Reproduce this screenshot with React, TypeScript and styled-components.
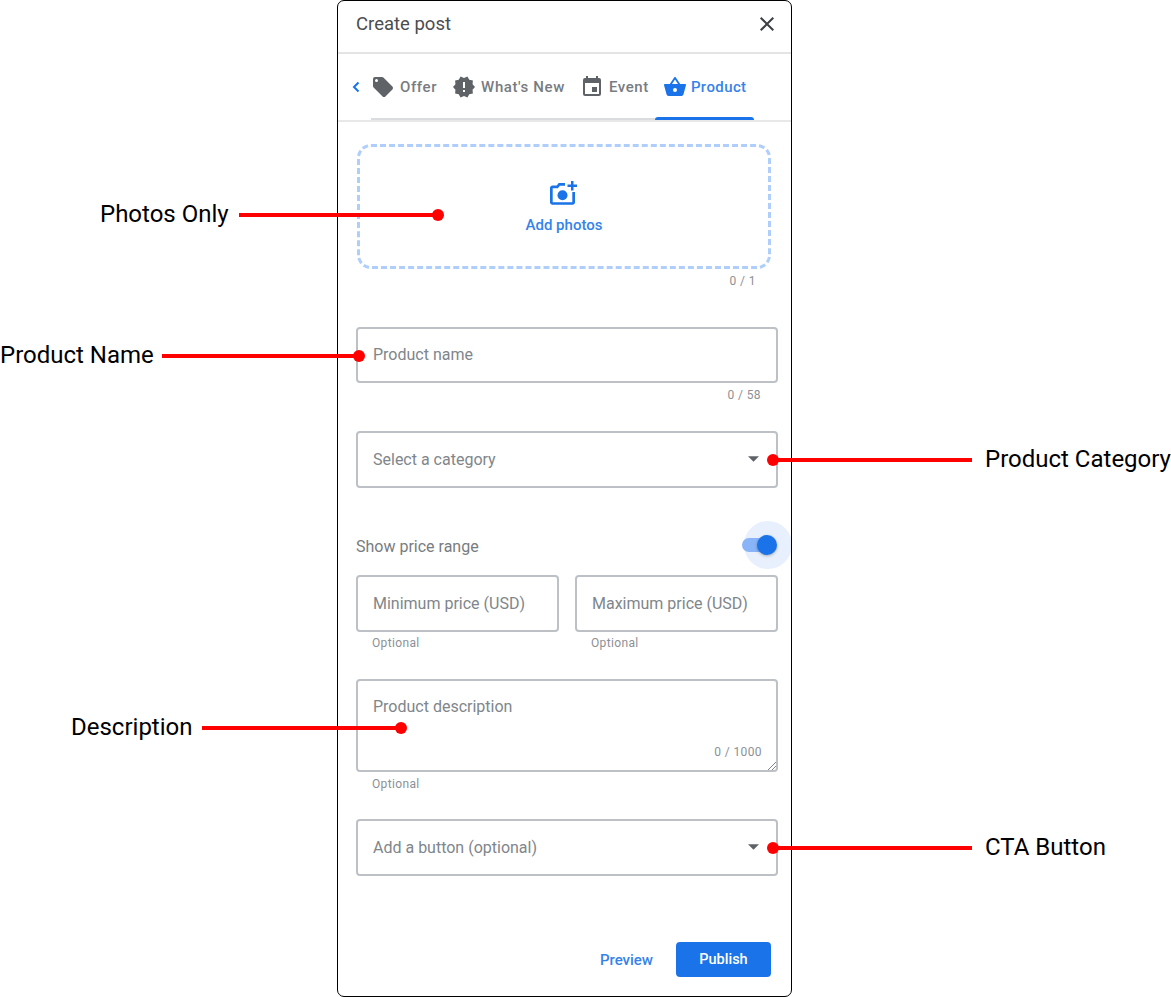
import styled, { createGlobalStyle } from 'styled-components'

const GlobalStyle = createGlobalStyle`
  html, body {
    margin: 0;
    padding: 0;
    background: #fff;
    font-family: Roboto, 'Liberation Sans', sans-serif;
  }
  * { box-sizing: border-box; }
`

const blue = '#1a73e8'
const softBlue = '#3583ea'

const tabs = [
  { label: 'Offer', icon: 'offer' },
  { label: "What's New", icon: 'new' },
  { label: 'Event', icon: 'event' },
]

const callouts = [
  { label: 'Photos Only', left: 100, top: 215, lineFrom: 239, lineTo: 438 },
  { label: 'Product Name', left: 0, top: 356, lineFrom: 162, lineTo: 359 },
  { label: 'Description', left: 71, top: 728, lineFrom: 202, lineTo: 401 },
  { label: 'Product Category', left: 985, top: 460, lineFrom: 773, lineTo: 972 },
  { label: 'CTA Button', left: 985, top: 848, lineFrom: 773, lineTo: 972 },
]

const TabIcon = ({ name }: { name: string }) => {
  if (name === 'offer') {
    return (
      <svg width="24" height="24" viewBox="0 0 24 24" fill="#5f6368">
        <path d="M21.41 11.58l-9-9A2 2 0 0 0 11 2H4a2 2 0 0 0-2 2v7c0 .55.22 1.05.59 1.42l9 9c.36.36.86.58 1.41.58s1.05-.22 1.41-.59l7-7c.37-.36.59-.86.59-1.41s-.23-1.06-.59-1.42zM5.5 7A1.5 1.5 0 1 1 5.5 4a1.5 1.5 0 0 1 0 3z" />
      </svg>
    )
  }
  if (name === 'new') {
    return (
      <svg width="24" height="24" viewBox="0 0 24 24" fill="#5f6368">
        <path d="M23 12l-2.44-2.79.34-3.69-3.61-.82L15.4 1.5 12 2.96 8.6 1.5 6.71 4.69 3.1 5.5l.34 3.7L1 12l2.44 2.79-.34 3.7 3.61.82L8.6 22.5l3.4-1.47 3.4 1.46 1.89-3.19 3.61-.82-.34-3.69L23 12zm-10 5h-2v-2h2v2zm0-4h-2V7h2v6z" />
      </svg>
    )
  }
  if (name === 'event') {
    return (
      <svg width="24" height="24" viewBox="0 0 24 24" fill="#5f6368">
        <path d="M17 12h-5v5h5v-5zM16 1v2H8V1H6v2H5a2 2 0 0 0-2 2v14a2 2 0 0 0 2 2h14a2 2 0 0 0 2-2V5a2 2 0 0 0-2-2h-1V1h-2zm3 18H5V8h14v11z" />
      </svg>
    )
  }
  return (
    <svg width="24" height="24" viewBox="0 0 24 24" fill={blue}>
      <path d="M17.21 9l-4.38-6.56a1 1 0 0 0-1.66 0L6.79 9H2c-.55 0-1 .45-1 1 0 .09.01.18.04.27l2.54 9.27A2 2 0 0 0 5.5 21h13a2 2 0 0 0 1.93-1.46l2.54-9.27L23 10c0-.55-.45-1-1-1h-4.79zM9 9l3-4.4L15 9H9zm3 8a2 2 0 1 1 0-4 2 2 0 0 1 0 4z" />
    </svg>
  )
}

const Caret = () => (
  <svg width="11" height="6" viewBox="0 0 10 5" fill="#5f6368">
    <path d="M0 0l5 5 5-5z" />
  </svg>
)

export default function App() {
  return (
    <Canvas>
      <GlobalStyle />
      <Card>
        <Header>
          <Title>Create post</Title>
          <svg width="24" height="24" viewBox="0 0 24 24" fill="#3c4043">
            <path d="M19 6.41L17.59 5 12 10.59 6.41 5 5 6.41 10.59 12 5 17.59 6.41 19 12 13.41 17.59 19 19 17.59 13.41 12z" />
          </svg>
        </Header>
        <TabBar>
          <BackArrow width="10" height="12" viewBox="0 0 10 12" fill="none" stroke={blue} strokeWidth="2">
            <path d="M7.5 1.5L3 6l4.5 4.5" />
          </BackArrow>
          {tabs.map((t) => (
            <Tab key={t.label}>
              <TabIcon name={t.icon} />
              <TabLabel>{t.label}</TabLabel>
            </Tab>
          ))}
          <ActiveTab>
            <TabIcon name="product" />
            <TabLabel $active>Product</TabLabel>
          </ActiveTab>
        </TabBar>

        <Body>
          <DropZone>
            <svg width="30" height="26" viewBox="1 0 30 26" fill={blue}>
              <path d="M4.500 5.500h4.200l2-2.500H17v2.700h-5.100L9.900 8.200H4.700v14h19.600V12H27v10.300c0 1.300-1.100 2.400-2.400 2.400H4.400C3.100 24.700 2 23.600 2 22.300V8c0-1.400 1.100-2.500 2.500-2.500z" />
              <circle cx="14.500" cy="15.300" r="5" />
              <path d="M23 1h2.500v3.500H29V7h-3.500v3.500H23V7h-3.500V4.500H23z" />
            </svg>
            <AddPhotos>Add photos</AddPhotos>
          </DropZone>
          <Counter $pad={22}>0 / 1</Counter>

          <Field $top={39} $height={56}>
            <Placeholder>Product name</Placeholder>
          </Field>
          <Counter $pad={17}>0 / 58</Counter>

          <Field $top={29} $height={57}>
            <Placeholder>Select a category</Placeholder>
            <Caret />
          </Field>

          <ToggleRow>
            <ToggleLabel>Show price range</ToggleLabel>
            <Toggle>
              <Halo />
              <Track />
              <Knob />
            </Toggle>
          </ToggleRow>

          <PriceRow>
            <PriceColumn>
              <Field $top={0} $height={57}>
                <Placeholder>Minimum price (USD)</Placeholder>
              </Field>
              <Hint $top={4}>Optional</Hint>
            </PriceColumn>
            <PriceColumn>
              <Field $top={0} $height={57}>
                <Placeholder>Maximum price (USD)</Placeholder>
              </Field>
              <Hint $top={4}>Optional</Hint>
            </PriceColumn>
          </PriceRow>

          <TextArea>
            <Placeholder>Product description</Placeholder>
            <AreaCount>0 / 1000</AreaCount>
            <Grip width="8" height="8" viewBox="0 0 8 8" stroke="#80868b" strokeWidth="1">
              <path d="M0 8L8 0M4 8l4-4" />
            </Grip>
          </TextArea>
          <Hint $top={5}>Optional</Hint>

          <Field $top={28} $height={57}>
            <Placeholder>Add a button (optional)</Placeholder>
            <Caret />
          </Field>

          <Footer>
            <PreviewButton>Preview</PreviewButton>
            <PublishButton>Publish</PublishButton>
          </Footer>
        </Body>
      </Card>

      {callouts.map((c) => (
        <Callout key={c.label}>
          <CalloutLabel style={{ left: c.left, top: c.top }}>{c.label}</CalloutLabel>
          <CalloutLine style={{ left: c.lineFrom, top: c.top - 2, width: c.lineTo - c.lineFrom }} />
          <CalloutDot
            style={{ left: (c.left > 900 ? c.lineFrom : c.lineTo) - 6, top: c.top - 6 }}
          />
        </Callout>
      ))}
    </Canvas>
  )
}

const Canvas = styled.div`
  position: relative;
  width: 1171px;
  height: 997px;
  padding-left: 337px;
  overflow: hidden;
`

const Card = styled.div`
  display: flex;
  flex-direction: column;
  width: 455px;
  height: 997px;
  border: 1px solid #000;
  border-radius: 7px;
  background: #fff;
  overflow: hidden;
`

const Header = styled.div`
  display: flex;
  align-items: center;
  justify-content: space-between;
  flex-shrink: 0;
  height: 53px;
  padding: 0 12px 6px 18px;
  border-bottom: 2px solid #e4e4e4;
`

const Title = styled.div`
  font-size: 18.500px;
  color: #4a4d50;
`

const TabBar = styled.div`
  position: relative;
  display: flex;
  align-items: center;
  flex-shrink: 0;
  gap: 15px;
  height: 68px;
  padding-left: 13px;
  border-bottom: 2px solid #e8e8e8;

  &::before {
    content: '';
    position: absolute;
    left: 33px;
    width: 285px;
    bottom: 0;
    height: 2px;
    background: #dadce0;
  }
`

const BackArrow = styled.svg`
  margin-right: -5px;
`

const Tab = styled.div`
  display: flex;
  align-items: center;
  gap: 5px;
`

const ActiveTab = styled(Tab)`
  position: relative;
  align-self: stretch;
  gap: 4px;
  width: 99px;
  padding-left: 8px;
  margin-left: -9px;

  &::after {
    content: '';
    position: absolute;
    left: 0;
    right: 0;
    bottom: 0;
    height: 3px;
    border-radius: 3px 3px 0 0;
    background: ${blue};
  }
`

const TabLabel = styled.span<{ $active?: boolean }>`
  font-size: 15px;
  font-weight: 500;
  letter-spacing: ${(p) => (p.$active ? 0.4 : 0.6)}px;
  white-space: nowrap;
  color: ${(p) => (p.$active ? softBlue : '#787c81')};
`

const Body = styled.div`
  display: flex;
  flex-direction: column;
  flex: 1;
  padding: 22px 13px 0 18px;
`

const DropZone = styled.div`
  display: flex;
  flex-direction: column;
  align-items: center;
  justify-content: center;
  gap: 10px;
  width: 414px;
  height: 125px;
  margin-left: 1px;
  padding-top: 1px;
  border: 3px dashed #b0cefc;
  border-radius: 14px;
`

const AddPhotos = styled.div`
  font-size: 15px;
  font-weight: 500;
  color: ${softBlue};
`

const Counter = styled.div<{ $pad: number }>`
  align-self: flex-end;
  margin-top: 5px;
  padding-right: ${(p) => p.$pad}px;
  font-size: 12px;
  line-height: 14px;
  letter-spacing: 0.4px;
  color: #8c9095;
`

const Field = styled.div<{ $top: number; $height: number }>`
  display: flex;
  align-items: center;
  justify-content: space-between;
  height: ${(p) => p.$height}px;
  margin-top: ${(p) => p.$top}px;
  padding: 0 17px 1px 15px;
  border: 2px solid #bdc1c6;
  border-radius: 4px;
`

const Placeholder = styled.span`
  font-size: 16px;
  color: #80868b;
  white-space: nowrap;
`

const ToggleRow = styled.div`
  display: flex;
  align-items: center;
  justify-content: space-between;
  height: 48px;
  margin-top: 34px;
  margin-bottom: 5px;
`

const ToggleLabel = styled.span`
  font-size: 16px;
  color: #787c81;
`

const Toggle = styled.div`
  position: relative;
  top: -1px;
  width: 36px;
  height: 20px;
`

const Halo = styled.div`
  position: absolute;
  left: 2px;
  top: -14px;
  width: 48px;
  height: 48px;
  border-radius: 50%;
  background: #e8f0fe;
`

const Track = styled.div`
  position: absolute;
  left: 0;
  top: 3px;
  width: 34px;
  height: 14px;
  border-radius: 7px;
  background: #8ab4f8;
`

const Knob = styled.div`
  position: absolute;
  left: 15px;
  top: 0;
  width: 20px;
  height: 20px;
  border-radius: 50%;
  background: ${blue};
  box-shadow: 0 1px 3px rgba(0, 0, 0, 0.3);
`

const PriceRow = styled.div`
  display: grid;
  grid-template-columns: 203px 203px;
  gap: 16px;
`

const PriceColumn = styled.div`
  display: flex;
  flex-direction: column;
`

const Hint = styled.div<{ $top: number }>`
  margin-top: ${(p) => p.$top}px;
  padding-left: 16px;
  font-size: 12px;
  line-height: 14px;
  letter-spacing: 0.35px;
  color: #8c9095;
`

const TextArea = styled.div`
  position: relative;
  height: 93px;
  margin-top: 29px;
  padding: 16px 15px;
  border: 2px solid #bdc1c6;
  border-radius: 4px;
`

const AreaCount = styled.span`
  position: absolute;
  right: 14px;
  bottom: 11px;
  font-size: 12px;
  letter-spacing: 0.4px;
  color: #8c9095;
`

const Grip = styled.svg`
  position: absolute;
  right: 0;
  bottom: 0;
`

const Footer = styled.div`
  display: flex;
  align-items: center;
  justify-content: flex-end;
  gap: 23px;
  margin-top: 66px;
  padding-right: 7px;
`

const PreviewButton = styled.span`
  font-size: 15px;
  font-weight: 500;
  color: ${softBlue};
`

const PublishButton = styled.div`
  display: flex;
  align-items: center;
  justify-content: center;
  width: 95px;
  height: 35px;
  border-radius: 4px;
  background: ${blue};
  font-size: 14.500px;
  font-weight: 500;
  color: #fff;
`

const Callout = styled.div`
  display: contents;
`

const CalloutLabel = styled.div`
  position: absolute;
  margin-top: -1px;
  transform: translateY(-50%);
  font-size: 24px;
  line-height: 28px;
  color: #000;
  white-space: nowrap;
`

const CalloutLine = styled.div`
  position: absolute;
  height: 4px;
  background: #f00;
`

const CalloutDot = styled.div`
  position: absolute;
  width: 12px;
  height: 12px;
  border-radius: 50%;
  background: #f00;
`
